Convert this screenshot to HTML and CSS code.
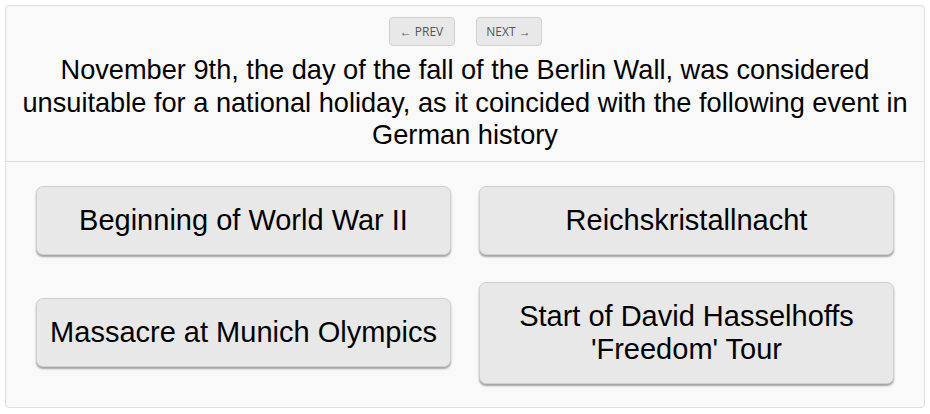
FILE: index.html
```html
<!DOCTYPE html>
<html lang="en">
<head>
<meta charset="utf-8">
<title>Quiz</title>
<link rel="stylesheet" href="styles.css">
</head>
<body>
<div class="quiz">
  <div class="quiz-header">
    <div class="nav">
      <button class="nav-btn">&larr; PREV</button>
      <button class="nav-btn">NEXT &rarr;</button>
    </div>
    <p class="question">November 9th, the day of the fall of the Berlin Wall, was considered unsuitable for a national holiday, as it coincided with the following event in German history</p>
  </div>
  <div class="answers">
    <button class="answer">Beginning of World War II</button>
    <button class="answer">Reichskristallnacht</button>
    <button class="answer">Massacre at Munich Olympics</button>
    <button class="answer">Start of David Hasselhoffs 'Freedom' Tour</button>
  </div>
</div>
</body>
</html>
```
FILE: styles.css
```css
html, body {
  margin: 0;
  padding: 0;
  background: #ffffff;
}
body {
  font-family: "Liberation Sans", Arial, sans-serif;
  color: #000;
}
.quiz {
  box-sizing: border-box;
  width: 920px;
  margin: 5px 0 0 5px;
  background: #f9f9f9;
  border: 1px solid #dedede;
  border-radius: 4px;
}
.quiz-header {
  padding: 11px 10px 9px;
  border-bottom: 1px solid #dedede;
  text-align: center;
}
.nav {
  display: flex;
  justify-content: center;
  gap: 21px;
}
.nav-btn {
  box-sizing: border-box;
  width: 66px;
  height: 29px;
  padding: 0;
  font-family: "Open Sans", "Liberation Sans", sans-serif;
  font-size: 12px;
  color: #555;
  background: #e8e8e8;
  border: 1px solid #d2d2d2;
  border-radius: 4px;
}
.question {
  margin: 8px 0 0;
  font-size: 27.2px;
  line-height: 32.5px;
}
.answers {
  display: grid;
  grid-template-columns: 1fr 1fr;
  column-gap: 28px;
  row-gap: 27px;
  padding: 24px 30px 23px;
  align-items: center;
}
.answer {
  box-sizing: border-box;
  width: 100%;
  padding: 17px 6px;
  font-family: "Liberation Sans", Arial, sans-serif;
  font-size: 29px;
  line-height: 33px;
  color: #000;
  background: #e8e8e8;
  border: 1px solid #d0d0d0;
  border-radius: 7px;
  box-shadow: 0 2px 2px rgba(0, 0, 0, 0.35);
}
```
